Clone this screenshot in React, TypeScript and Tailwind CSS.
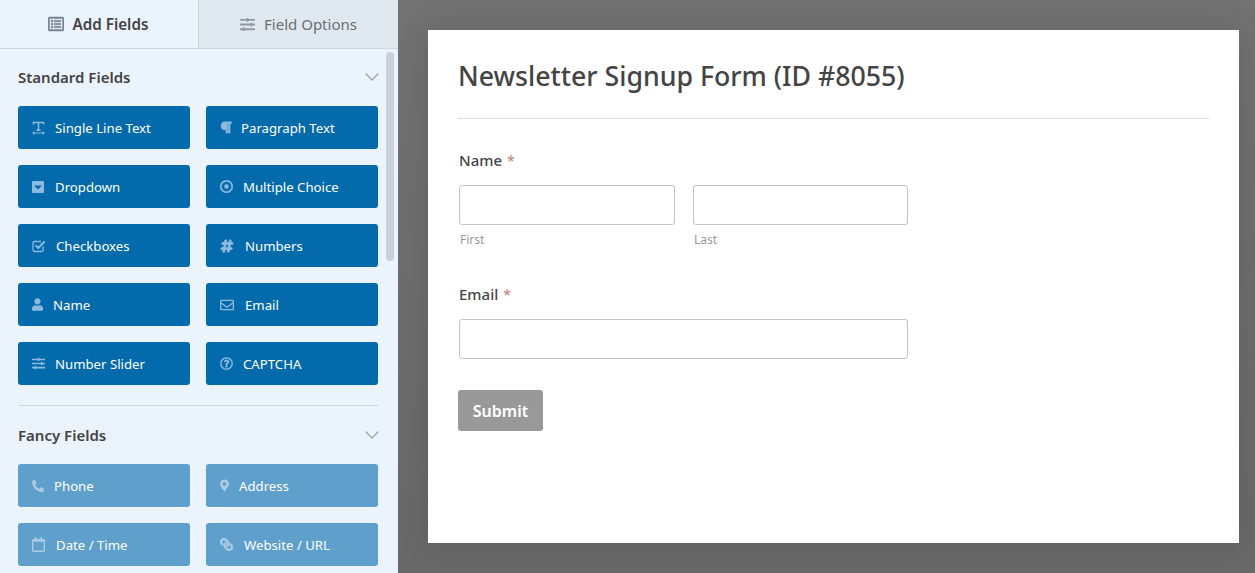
import type { ComponentType } from "react";
import { ChevronDown } from "lucide-react";
import {
  FaCaretSquareDown,
  FaHashtag,
  FaLink,
  FaMapMarkerAlt,
  FaParagraph,
  FaPhoneAlt,
  FaRegCalendar,
  FaRegDotCircle,
  FaRegEnvelope,
  FaRegListAlt,
  FaRegQuestionCircle,
  FaSlidersH,
  FaUser,
} from "react-icons/fa";

type IconProps = { className?: string };
type Field = { label: string; icon: ComponentType<IconProps>; iconClass: string; gap: string };

function TextWidthIcon({ className }: IconProps) {
  return (
    <svg className={className} viewBox="0 0 14 14" fill="none" stroke="currentColor" strokeWidth={1.6}>
      <path d="M1.5 3.2V1h11v2.2M7 1v8.5M4.8 9.5h4.4" />
      <path d="M1 12.5h12M2.6 11l-1.6 1.5L2.6 14M11.4 11l1.6 1.5L11.4 14" strokeWidth={1.1} />
    </svg>
  );
}

function CheckSquareIcon({ className }: IconProps) {
  return (
    <svg className={className} viewBox="0 0 14 14" fill="none" stroke="currentColor">
      <path d="M11 7.5V11a1.5 1.5 0 0 1-1.5 1.5h-7A1.5 1.5 0 0 1 1 11V4a1.5 1.5 0 0 1 1.5-1.5H9" strokeWidth={1.3} />
      <path d="M3.6 6.4 6.2 9l6.6-6.6" strokeWidth={2} />
    </svg>
  );
}

const standardFields: Field[] = [
  { label: "Single Line Text", icon: TextWidthIcon, iconClass: "w-[13px] h-[14px]", gap: "gap-[10px]" },
  { label: "Paragraph Text", icon: FaParagraph, iconClass: "w-[12px] h-[13px] [stroke-width:20]", gap: "gap-[9px]" },
  { label: "Dropdown", icon: FaCaretSquareDown, iconClass: "w-[12px] h-[14px]", gap: "gap-[11px]" },
  { label: "Multiple Choice", icon: FaRegDotCircle, iconClass: "w-[13px] h-[13px] [stroke-width:24]", gap: "gap-[10px]" },
  { label: "Checkboxes", icon: CheckSquareIcon, iconClass: "w-[14px] h-[14px]", gap: "gap-[10px]" },
  { label: "Numbers", icon: FaHashtag, iconClass: "w-[14px] h-[14px] [stroke-width:36]", gap: "gap-[11px]" },
  { label: "Name", icon: FaUser, iconClass: "w-[11px] h-[13px]", gap: "gap-[10px]" },
  { label: "Email", icon: FaRegEnvelope, iconClass: "w-[14px] h-[14px]", gap: "gap-[11px]" },
  { label: "Number Slider", icon: FaSlidersH, iconClass: "w-[13px] h-[13px]", gap: "gap-[10px]" },
  { label: "CAPTCHA", icon: FaRegQuestionCircle, iconClass: "w-[13px] h-[13px] [stroke-width:10]", gap: "gap-[10px]" },
];

const fancyFields: Field[] = [
  { label: "Phone", icon: FaPhoneAlt, iconClass: "w-[12px] h-[12px]", gap: "gap-[10px]" },
  { label: "Address", icon: FaMapMarkerAlt, iconClass: "w-[9px] h-[13px]", gap: "gap-[10px]" },
  { label: "Date / Time", icon: FaRegCalendar, iconClass: "w-[13px] h-[15px]", gap: "gap-[11px]" },
  { label: "Website / URL", icon: FaLink, iconClass: "w-[13px] h-[13px] -scale-x-100 [stroke-width:20]", gap: "gap-[11px]" },
];

function FieldButton({ field, fancy }: { field: Field; fancy?: boolean }) {
  const Icon = field.icon;
  return (
    <div
      className={`flex items-center h-[43px] pl-[14px] rounded-[3px] text-white text-[13.2px] ${field.gap} ${
        fancy ? "bg-[#5f9fcb]" : "bg-[#036aab]"
      }`}
    >
      <Icon className={`shrink-0 ${field.iconClass} ${fancy ? "text-[#a9cbe4]" : "text-[#8dbbdf]"}`} />
      <span className="pt-[2px]">{field.label}</span>
    </div>
  );
}

function SectionHeader({ title }: { title: string }) {
  return (
    <div className="flex items-center justify-between h-[20px]">
      <span className="text-[15px] font-semibold text-[#444444]">{title}</span>
      <ChevronDown className="w-[24px] h-[24px] -mr-[6px] text-[#98a3ae]" strokeWidth={1.3} />
    </div>
  );
}

export default function App() {
  return (
    <div
      className="flex h-screen overflow-hidden bg-[#6c6c6c]"
      style={{ fontFamily: '"Noto Sans", "Open Sans", sans-serif' }}
    >
      {/* Left: field picker */}
      <aside className="relative w-[398px] shrink-0 bg-[#ebf3fc] overflow-hidden">
        <div className="flex h-[49px] border-b border-[#ced7e0]">
          <div className="flex items-center justify-center gap-[9px] w-[198px] pr-[2px] text-[15.2px] font-semibold text-[#444444]">
            <FaRegListAlt className="w-[16px] h-[16px] text-[#7b8692] [stroke-width:16]" />
            <span>Add Fields</span>
          </div>
          <div className="flex items-center justify-center gap-[9px] w-[200px] bg-[#e0e8f0] border-l border-[#ced7e0] text-[15px] text-[#6b6f73]">
            <FaSlidersH className="w-[15px] h-[15px] text-[#8e99a4]" />
            <span>Field Options</span>
          </div>
        </div>

        <div className="pl-[18px] pr-[20px] pt-[18px]">
          <SectionHeader title="Standard Fields" />
          <div className="grid grid-cols-2 gap-x-[16px] gap-y-[16px] mt-[19px]">
            {standardFields.map((f) => (
              <FieldButton key={f.label} field={f} />
            ))}
          </div>
          <div className="border-t border-[#ced7e0] mt-[20px] mb-[19px]" />
          <SectionHeader title="Fancy Fields" />
          <div className="grid grid-cols-2 gap-x-[16px] gap-y-[16px] mt-[19px]">
            {fancyFields.map((f) => (
              <FieldButton key={f.label} field={f} fancy />
            ))}
          </div>
        </div>

        {/* scrollbar */}
        <div className="absolute left-[386px] top-[52px] w-[8px] h-[209px] rounded-[4px] bg-[#c8d0d9]" />
      </aside>

      {/* Right: form preview */}
      <main className="flex-1 pt-[30px] pl-[30px] pr-[16px] bg-gradient-to-b from-[#727272] to-[#686868]">
        <div className="h-[513px] bg-white px-[30px] pt-[26px] shadow-[0_0_30px_rgba(0,0,0,0.12)]">
          <h1 className="h-[63px] text-[26.7px] leading-[40px] font-medium text-[#444444] border-b border-[#dddddd]">
            Newsletter Signup Form (ID #8055)
          </h1>

          <div className="mt-[30px] pl-px w-[451px]">
            <div className="h-[22px] text-[15px] leading-[22px] font-medium text-[#444444]">
              Name <span className="ml-[1px] text-[14px] font-normal text-[#c27a72]">*</span>
            </div>
            <div className="flex gap-[18px] mt-[14px]">
              <div className="w-[216px]">
                <div className="h-[40px] border border-[#c4c4c4] rounded-[3px] bg-white" />
                <div className="mt-[6px] pl-px text-[12px] leading-[18px] text-[#999999]">First</div>
              </div>
              <div className="w-[215px]">
                <div className="h-[40px] border border-[#c4c4c4] rounded-[3px] bg-white" />
                <div className="mt-[6px] pl-px text-[12px] leading-[18px] text-[#999999]">Last</div>
              </div>
            </div>

            <div className="mt-[34px] h-[22px] text-[15px] leading-[22px] font-medium text-[#444444]">
              Email <span className="ml-[1px] text-[14px] font-normal text-[#c27a72]">*</span>
            </div>
            <div className="mt-[14px] w-[449px] h-[40px] border border-[#c4c4c4] rounded-[3px] bg-white" />
          </div>

          <div className="mt-[31px] flex items-center justify-center w-[85px] h-[41px] rounded-[3px] bg-[#999999] text-white text-[16px] font-semibold">
            Submit
          </div>
        </div>
      </main>
    </div>
  );
}
